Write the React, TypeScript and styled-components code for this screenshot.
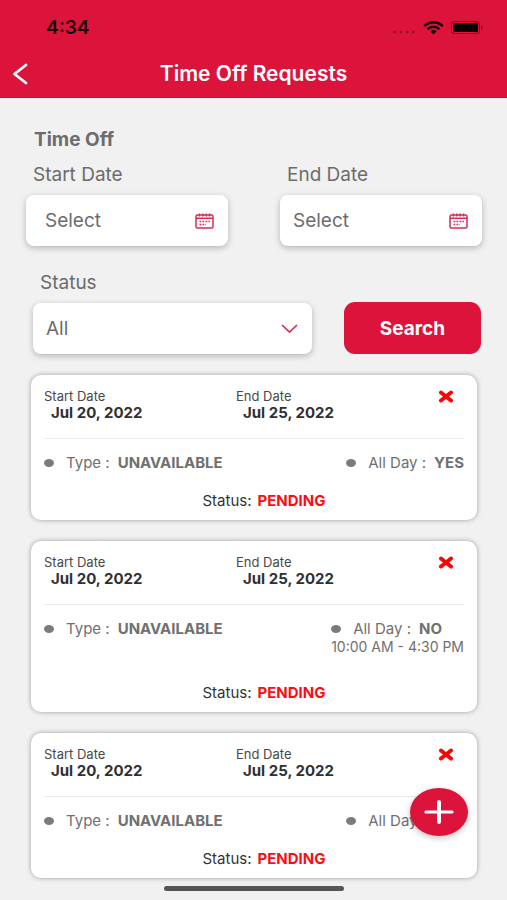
import React from "react";
import styled, { createGlobalStyle } from "styled-components";

const red = "#dc143c";

const GlobalStyle = createGlobalStyle`
  * { box-sizing: border-box; }
  body {
    margin: 0;
    background: #f1f1f1;
    color: #6c6c6c;
    font-family: Inter, "Liberation Sans", sans-serif;
  }
  button, input, select { font: inherit; color: inherit; }
`;

const Screen = styled.div`
  min-height: 100vh;
  padding-bottom: 22px;
`;

const Header = styled.header`
  background: ${red};
  border-bottom: 1px solid #c51238;
`;

const StatusBar = styled.div`
  display: flex;
  align-items: center;
  justify-content: space-between;
  height: 51px;
  padding: 4px 24px 0 46px;
  color: #14050a;
  font-size: 19px;
  font-weight: 600;
`;

const Indicators = styled.div`
  display: flex;
  align-items: center;
  gap: 7px;
`;

const TitleBar = styled.div`
  display: grid;
  grid-template-columns: 40px 1fr 40px;
  align-items: center;
  height: 46px;
`;

const BackButton = styled.button`
  display: flex;
  padding: 0 0 0 12px;
  border: 0;
  background: none;
`;

const Title = styled.h1`
  margin: 0;
  color: #fff;
  font-size: 21px;
  line-height: 26px;
  font-weight: 600;
  text-align: center;
`;

const Filters = styled.form`
  padding: 30px 25px 0 26px;
`;

const SectionTitle = styled.h2`
  margin: 0 0 12px 8px;
  font-size: 19px;
  line-height: 24px;
  font-weight: 700;
`;

const DateRow = styled.div`
  display: grid;
  grid-template-columns: 1fr 1fr;
  gap: 52px;
`;

const Field = styled.div`
  min-width: 0;
`;

const Label = styled.label`
  display: block;
  margin: 0 7px 9px;
  font-size: 19px;
  line-height: 22px;
`;

const Control = styled.div<{ $inset: number }>`
  display: flex;
  align-items: center;
  height: 51px;
  padding: 0 14px 0 ${(p) => p.$inset}px;
  border-radius: 8px;
  background: #fff;
  box-shadow: 0 2px 6px rgba(0, 0, 0, 0.25);
`;

const DateInput = styled.input`
  flex: 1;
  min-width: 0;
  padding: 0;
  border: 0;
  outline: 0;
  background: none;
  font-size: 19px;
  &::placeholder { color: #6c6c6c; opacity: 1; }
`;

const IconButton = styled.button`
  display: flex;
  padding: 0;
  border: 0;
  background: none;
`;

const StatusRow = styled.div`
  display: grid;
  grid-template-columns: 279fr 137fr;
  gap: 32px;
  align-items: end;
  margin: 26px 0 0;
  padding: 0 1px 0 7px;
`;

const StatusSelect = styled.select`
  flex: 1;
  appearance: none;
  padding: 0;
  border: 0;
  outline: 0;
  background: none;
  font-size: 19px;
`;

const SearchButton = styled.button`
  height: 52px;
  border: 0;
  border-radius: 11px;
  background: ${red};
  color: #fff;
  font-size: 19px;
  font-weight: 700;
`;

const RequestList = styled.ul`
  display: grid;
  gap: 21px;
  margin: 21px 0 0;
  padding: 0 30px 0 31px;
  list-style: none;
`;

const Card = styled.li`
  padding: 13px 13px 11px;
  border-radius: 10px;
  background: #fff;
  box-shadow: 0 0 5px rgba(0, 0, 0, 0.35);
  font-size: 15px;
  line-height: 16px;
`;

const CardTop = styled.div`
  display: grid;
  grid-template-columns: 192px 1fr auto;
  align-items: start;
  height: 51px;
  border-bottom: 1px solid #ececec;
`;

const DateLabel = styled.div`
  color: #484848;
  font-size: 13px;
  line-height: 16px;
`;

const DateValue = styled.div`
  padding-left: 7px;
  color: #303030;
  font-weight: 700;
  line-height: 18px;
`;

const RemoveButton = styled(IconButton)`
  padding: 2px 10px 0 0;
`;

const Details = styled.div`
  display: flex;
  justify-content: space-between;
  padding: 16px 0 22px;
  color: #707070;
`;

const Detail = styled.div`
  display: flex;
  align-items: center;
`;

const Dot = styled.span`
  width: 10px;
  height: 8px;
  margin-right: 12px;
  border-radius: 50%;
  background: #7b7b7b;
`;

const Strong = styled.strong`
  margin-left: 8px;
  font-weight: 700;
`;

const Hours = styled.div`
  padding: 2px 0 8px;
  font-size: 14px;
`;

const StatusLine = styled.div`
  padding-left: 20px;
  color: #333;
  text-align: center;
`;

const StatusValue = styled.strong`
  margin-left: 6px;
  color: #fb0d14;
  font-weight: 700;
`;

const AddButton = styled.button`
  position: fixed;
  right: 39px;
  bottom: 64px;
  display: flex;
  align-items: center;
  justify-content: center;
  width: 58px;
  height: 48px;
  padding: 0;
  border: 0;
  border-radius: 50%;
  background: ${red};
  box-shadow: 0 2px 6px rgba(0, 0, 0, 0.25);
`;

const HomeIndicator = styled.div`
  position: fixed;
  bottom: 9px;
  left: 50%;
  width: 180px;
  height: 5px;
  margin-left: -90px;
  border-radius: 3px;
  background: #555;
`;

const WifiIcon = () => (
  <svg width="21" height="14" viewBox="0 0 21 14" fill="none" stroke="#14050a" strokeWidth="2.5">
    <path d="M1.2 5.1C6.5-.1 14.500-.1 19.800 5.100" />
    <path d="M4.600 8.100C8 4.800 13 4.800 16.400 8.100" />
    <path d="M7.200 10.300C9.200 8.600 11.800 8.600 13.800 10.300L10.500 13.500Z" fill="#14050a" stroke="none" />
  </svg>
);

const BatteryIcon = () => (
  <svg width="32" height="13" viewBox="0 0 32 13">
    <rect x=".5" y=".5" width="28" height="12" rx="3" fill="none" stroke="#14050a" strokeOpacity=".5" />
    <rect x="2" y="2" width="25" height="9" rx="1.500" fill="#0a0203" />
    <path d="M30 4.500C32 5 32 8 30 8.500Z" fill="#14050a" fillOpacity=".6" />
  </svg>
);

const SignalDots = () => (
  <svg width="23" height="14" viewBox="0 0 23 14" fill="#14050a" fillOpacity=".4">
    <circle cx="1.800" cy="11" r="1.300" />
    <circle cx="8" cy="11" r="1.300" />
    <circle cx="14.200" cy="11" r="1.300" />
    <circle cx="20.400" cy="11" r="1.300" />
  </svg>
);

const CalendarIcon = () => (
  <svg width="19" height="16" viewBox="0 0 19 16" fill="none" stroke="#d72d50" strokeWidth="1.500">
    <rect x="1" y="2" width="17" height="13" rx="1.500" />
    <path d="M1 5.300H18M4.500 .5V3.500M7.800 .5V3.500M11.200 .5V3.500M14.500 .5V3.500" />
    <path d="M4.500 8.500H15M4.500 11.500H11" strokeWidth="1.600" strokeDasharray="1.800 1.200" />
  </svg>
);

const ChevronIcon = () => (
  <svg width="17" height="10" viewBox="0 0 17 10" fill="none" stroke="#d72d50" strokeWidth="1.700" strokeLinecap="round">
    <path d="M1.500 1.500L8.500 8L15.500 1.500" />
  </svg>
);

const RemoveIcon = () => (
  <svg width="16" height="13" viewBox="0 0 16 13" stroke="#fa0505" strokeWidth="4" strokeLinecap="round">
    <path d="M3 2.500L13 10.500M13 2.500L3 10.500" />
  </svg>
);

interface TimeOffRequest {
  id: number;
  start: string;
  end: string;
  type: string;
  allDay: boolean;
  hours?: string;
  status: string;
}

const base = { start: "Jul 20, 2022", end: "Jul 25, 2022", type: "UNAVAILABLE", status: "PENDING" };

const requests: TimeOffRequest[] = [
  { id: 1, ...base, allDay: true },
  { id: 2, ...base, allDay: false, hours: "10:00 AM - 4:30 PM" },
  { id: 3, ...base, allDay: true },
];

function DateField({ id, label, inset }: { id: string; label: string; inset: number }) {
  return (
    <Field>
      <Label htmlFor={id}>{label}</Label>
      <Control $inset={inset}>
        <DateInput id={id} placeholder="Select" />
        <IconButton type="button" aria-label={`Choose ${label.toLowerCase()}`}>
          <CalendarIcon />
        </IconButton>
      </Control>
    </Field>
  );
}

function RequestCard({ request }: { request: TimeOffRequest }) {
  return (
    <Card>
      <CardTop>
        <div>
          <DateLabel>Start Date</DateLabel>
          <DateValue>{request.start}</DateValue>
        </div>
        <div>
          <DateLabel>End Date</DateLabel>
          <DateValue>{request.end}</DateValue>
        </div>
        <RemoveButton type="button" aria-label="Remove request">
          <RemoveIcon />
        </RemoveButton>
      </CardTop>
      <Details>
        <div>
          <Detail>
            <Dot />
            Type :<Strong>{request.type}</Strong>
          </Detail>
        </div>
        <div>
          <Detail>
            <Dot />
            All Day :<Strong>{request.allDay ? "YES" : "NO"}</Strong>
          </Detail>
          {request.hours && <Hours>{request.hours}</Hours>}
        </div>
      </Details>
      <StatusLine>
        Status:<StatusValue>{request.status}</StatusValue>
      </StatusLine>
    </Card>
  );
}

export default function App() {
  return (
    <Screen>
      <GlobalStyle />
      <Header>
        <StatusBar>
          <span>4:34</span>
          <Indicators>
            <SignalDots />
            <WifiIcon />
            <BatteryIcon />
          </Indicators>
        </StatusBar>
        <TitleBar>
          <BackButton type="button" aria-label="Back">
            <svg width="17" height="22" viewBox="0 0 17 22" fill="none" stroke="#fff" strokeWidth="2.800" strokeLinecap="round" strokeLinejoin="round">
              <path d="M14 2L2.500 11L14 20" />
            </svg>
          </BackButton>
          <Title>Time Off Requests</Title>
        </TitleBar>
      </Header>
      <main>
        <Filters onSubmit={(e) => e.preventDefault()}>
          <SectionTitle>Time Off</SectionTitle>
          <DateRow>
            <DateField id="start" label="Start Date" inset={19} />
            <DateField id="end" label="End Date" inset={13} />
          </DateRow>
          <StatusRow>
            <Field>
              <Label htmlFor="status">Status</Label>
              <Control $inset={13}>
                <StatusSelect id="status">
                  <option>All</option>
                </StatusSelect>
                <ChevronIcon />
              </Control>
            </Field>
            <SearchButton type="submit">Search</SearchButton>
          </StatusRow>
        </Filters>
        <RequestList>
          {requests.map((request) => (
            <RequestCard key={request.id} request={request} />
          ))}
        </RequestList>
      </main>
      <AddButton type="button" aria-label="Add request">
        <svg width="30" height="24" viewBox="0 0 30 24" stroke="#fff" strokeLinecap="round">
          <path d="M2 12H28" strokeWidth="3.200" />
          <path d="M15 2V22" strokeWidth="4" />
        </svg>
      </AddButton>
      <HomeIndicator />
    </Screen>
  );
}
